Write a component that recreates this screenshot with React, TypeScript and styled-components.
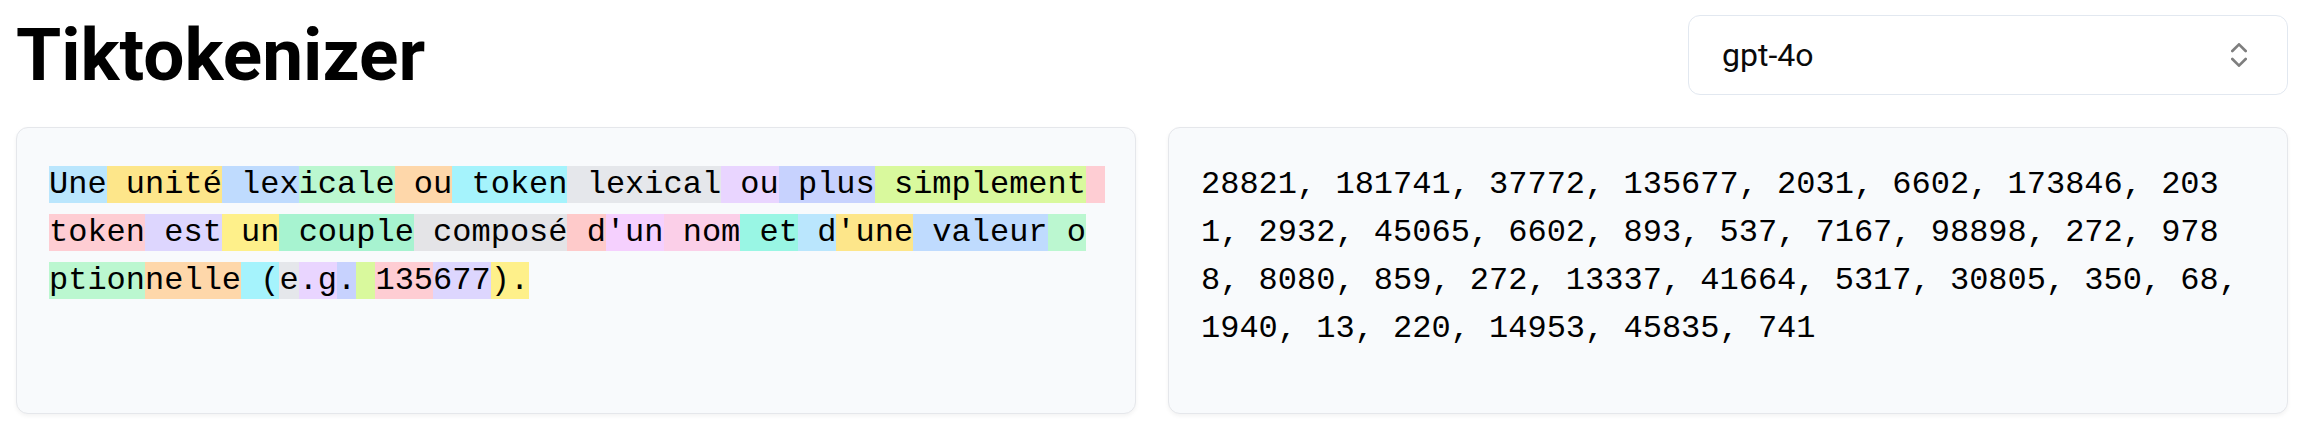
import React from "react";
import styled, { createGlobalStyle } from "styled-components";
import { ChevronsUpDown } from "lucide-react";

const GlobalStyle = createGlobalStyle`
  * { box-sizing: border-box; }
  html, body { margin: 0; padding: 0; background: #ffffff; }
  body { font-family: Roboto, "Noto Sans", sans-serif; color: #000; }
`;

const COLORS = [
  "#bae6fd", // sky
  "#fde68a", // amber
  "#bfdbfe", // blue
  "#bbf7d0", // green
  "#fed7aa", // orange
  "#a5f3fc", // cyan
  "#e5e7eb", // gray
  "#e9d5ff", // purple
  "#c7d2fe", // indigo
  "#d9f99d", // lime
  "#fecdd3", // rose
  "#ddd6fe", // violet
  "#fef08a", // yellow
  "#a7f3d0", // emerald
  "#e4e4e7", // zinc
  "#fecaca", // red
  "#f5d0fe", // fuchsia
  "#fbcfe8", // pink
  "#99f6e4", // teal
];

const TOKENS = [
  "Une", " unité", " lex", "icale", " ou", " token", " lexical", " ou", " plus",
  " simplement", " token", " est", " un", " couple", " composé", " d", "'un",
  " nom", " et", " d", "'une", " valeur", " option", "nelle", " (", "e", ".g",
  ".", " ", "135", "677", ").",
];

const IDS = [
  28821, 181741, 37772, 135677, 2031, 6602, 173846, 2031, 2932, 45065, 6602,
  893, 537, 7167, 98898, 272, 9788, 8080, 859, 272, 13337, 41664, 5317, 30805,
  350, 68, 1940, 13, 220, 14953, 45835, 741,
];

const Page = styled.main`
  padding: 15px 16px 16px;
`;

const Header = styled.header`
  display: flex;
  align-items: center;
  justify-content: space-between;
  height: 80px;
  margin-bottom: 32px;
`;

const Title = styled.h1`
  margin: 0;
  font-family: Roboto, "Noto Sans", sans-serif;
  font-weight: 700;
  font-size: 73px;
  line-height: 80px;
  color: #000;
`;

const ModelSelect = styled.div`
  width: 600px;
  height: 80px;
  display: flex;
  align-items: center;
  justify-content: space-between;
  padding: 0 32px 0 33px;
  border: 1px solid #e2e8f0;
  border-radius: 12px;
  background: #ffffff;
  font-family: Roboto, "Noto Sans", sans-serif;
  font-size: 32px;
  color: #0a0a0a;
`;

const SelectIcon = styled(ChevronsUpDown)`
  color: #000;
  opacity: 0.5;
  flex: none;
`;

const Panels = styled.section`
  display: grid;
  grid-template-columns: 1fr 1fr;
  gap: 32px;
`;

const Card = styled.div`
  min-height: 287px;
  padding: 33px 32px;
  border: 1px solid #e5e7eb;
  border-radius: 12px;
  background: #f8fafc;
  box-shadow: 0 2px 4px rgba(0, 0, 0, 0.05);
`;

const MonoText = styled.div`
  font-family: "Liberation Mono", monospace;
  font-size: 32px;
  line-height: 48px;
  color: #000;
  white-space: pre-wrap;
  word-break: break-all;
`;

const Token = styled.span<{ $bg: string }>`
  background: ${(p) => p.$bg};
`;

export default function App() {
  return (
    <>
      <GlobalStyle />
      <Page>
        <Header>
          <Title>Tiktokenizer</Title>
          <ModelSelect>
            <span>gpt-4o</span>
            <SelectIcon size={32} strokeWidth={2} />
          </ModelSelect>
        </Header>
        <Panels>
          <Card>
            <MonoText>
              {TOKENS.map((t, i) => (
                <Token key={i} $bg={COLORS[i % COLORS.length]}>
                  {t}
                </Token>
              ))}
            </MonoText>
          </Card>
          <Card>
            <MonoText>{IDS.join(", ")}</MonoText>
          </Card>
        </Panels>
      </Page>
    </>
  );
}
